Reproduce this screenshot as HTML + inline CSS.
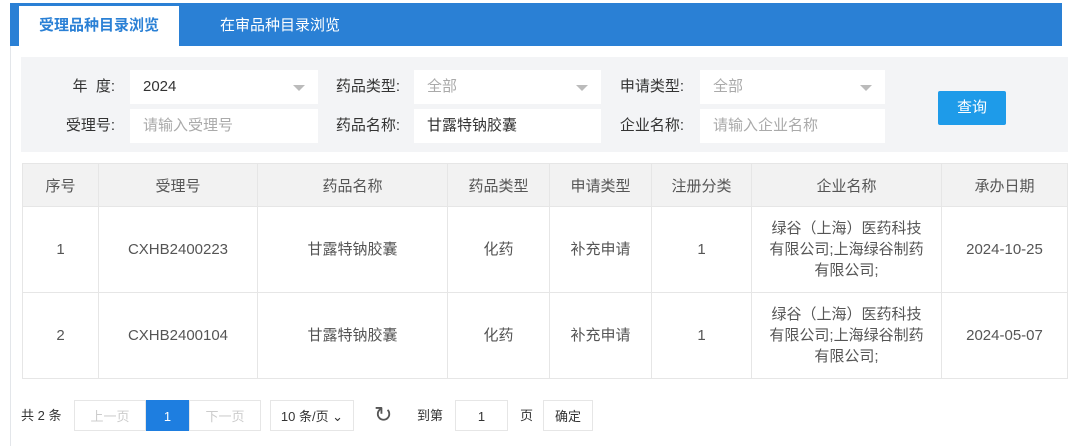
<!DOCTYPE html>
<html><head><meta charset="utf-8"><style>
*{box-sizing:border-box;margin:0;padding:0}
body{width:1080px;height:446px;background:#fff;font-family:"Liberation Sans","Noto Sans CJK SC",sans-serif;font-size:14px;color:#333;position:relative;overflow:hidden}
.a{position:absolute}
.bar{left:10px;top:3px;width:1052px;height:43px;background:#2a80d5}
.tab{top:6px;height:40px;line-height:40px;font-size:15px;text-align:center}
.frame{left:10px;top:46px;width:1px;height:400px;background:#e3e6ea}
.panel{left:21px;top:57px;width:1047px;height:95px;background:#f3f4f6}
.lbl{font-size:15px;color:#333;line-height:34px;text-align:right}
.inp{background:#fff;height:34px;line-height:34px;padding-left:13px;font-size:15px}
.ph{color:#aaa}
.arr{position:absolute;right:13px;top:15px;border-left:6px solid transparent;border-right:6px solid transparent;border-top:6px solid #bbb}
.btn{left:938px;top:91px;width:68px;height:34px;background:#1e9be9;color:#fff;line-height:34px;text-align:center;border-radius:2px;font-size:15px}
table{position:absolute;left:22px;top:163px;width:1046px;border-collapse:collapse;font-size:15px;color:#555}
td,th{border:1px solid #e6e6e6;text-align:center;font-weight:normal}
th{background:#f2f2f2;height:43px}
td{height:86px;line-height:21px}
.pg{top:400px;height:31px;line-height:31px;font-size:13px;text-align:center;border:1px solid #e6e6e6;background:#fff}
</style></head><body>
<div class="a bar"></div>
<div class="a tab" style="left:19px;width:160px;background:#fff;color:#2a80d5;font-weight:bold">受理品种目录浏览</div>
<div class="a tab" style="left:200px;width:160px;color:#fff">在审品种目录浏览</div>
<div class="a frame"></div>
<div class="a panel"></div>
<div class="a lbl" style="left:40px;top:70px;width:75px">年&nbsp;&nbsp;度:</div>
<div class="a inp" style="left:130px;top:70px;width:188px">2024<span class="arr"></span></div>
<div class="a lbl" style="left:40px;top:109px;width:75px">受理号:</div>
<div class="a inp ph" style="left:130px;top:109px;width:188px">请输入受理号</div>
<div class="a lbl" style="left:322px;top:70px;width:78px">药品类型:</div>
<div class="a inp ph" style="left:414px;top:70px;width:187px">全部<span class="arr"></span></div>
<div class="a lbl" style="left:322px;top:109px;width:78px">药品名称:</div>
<div class="a inp" style="left:414px;top:109px;width:187px">甘露特钠胶囊</div>
<div class="a lbl" style="left:606px;top:70px;width:78px">申请类型:</div>
<div class="a inp ph" style="left:700px;top:70px;width:185px">全部<span class="arr"></span></div>
<div class="a lbl" style="left:606px;top:109px;width:78px">企业名称:</div>
<div class="a inp ph" style="left:700px;top:109px;width:185px">请输入企业名称</div>
<div class="a btn">查询</div>
<table>
<tr><th style="width:76px">序号</th><th style="width:159px">受理号</th><th style="width:190px">药品名称</th><th style="width:102px">药品类型</th><th style="width:102px">申请类型</th><th style="width:100px">注册分类</th><th style="width:190px">企业名称</th><th>承办日期</th></tr>
<tr><td>1</td><td>CXHB2400223</td><td>甘露特钠胶囊</td><td>化药</td><td>补充申请</td><td>1</td><td>绿谷（上海）医药科技<br>有限公司;上海绿谷制药<br>有限公司;</td><td>2024-10-25</td></tr>
<tr><td>2</td><td>CXHB2400104</td><td>甘露特钠胶囊</td><td>化药</td><td>补充申请</td><td>1</td><td>绿谷（上海）医药科技<br>有限公司;上海绿谷制药<br>有限公司;</td><td>2024-05-07</td></tr>
</table>
<div class="a" style="left:21px;top:400px;line-height:31px;font-size:13px">共 2 条</div>
<div class="a pg" style="left:74px;width:72px;color:#ccc">上一页</div>
<div class="a pg" style="left:146px;width:43px;background:#1e7ee0;border-color:#1e7ee0;color:#fff">1</div>
<div class="a pg" style="left:189px;width:72px;color:#ccc">下一页</div>
<div class="a pg" style="left:270px;width:84px;color:#333">10 条/页 ⌄</div>
<div class="a" style="left:374px;top:399px;font-size:22px;line-height:31px;color:#555">↻</div>
<div class="a" style="left:417px;top:400px;line-height:31px;font-size:13px">到第</div>
<div class="a pg" style="left:455px;width:53px;color:#333">1</div>
<div class="a" style="left:520px;top:400px;line-height:31px;font-size:13px">页</div>
<div class="a pg" style="left:543px;width:50px;color:#333">确定</div>
</body></html>
